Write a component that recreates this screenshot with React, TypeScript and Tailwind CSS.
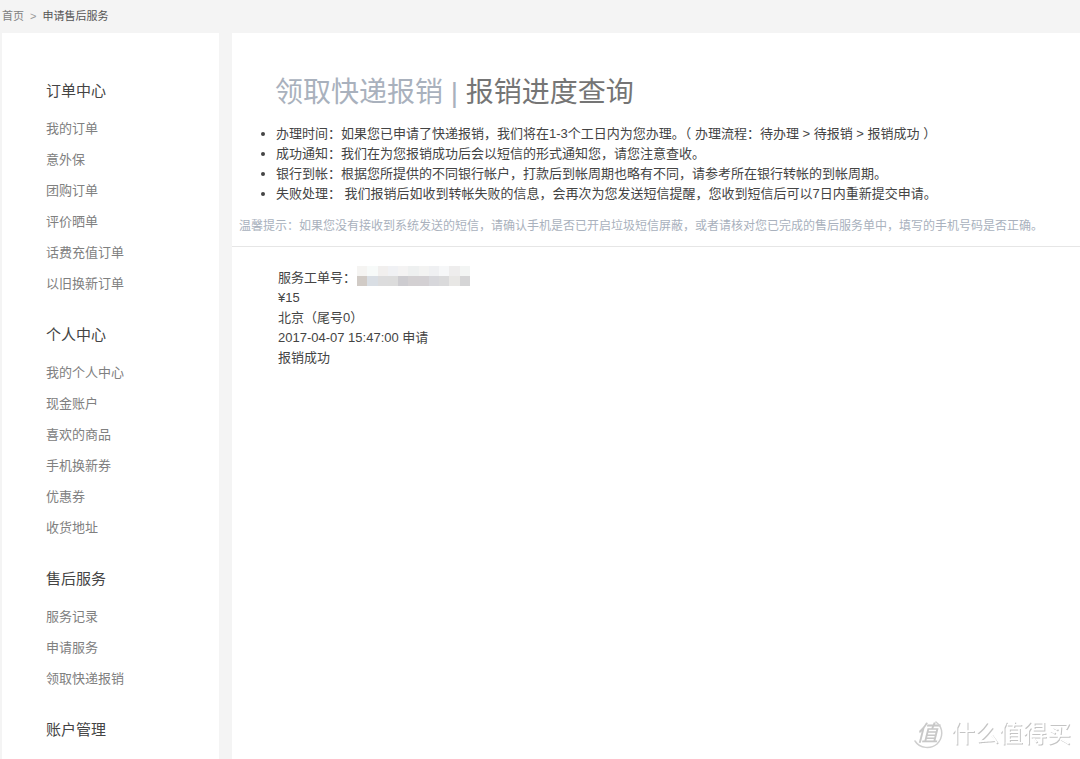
type NavGroup = { title: string; items: string[] };

const NAV_GROUPS: NavGroup[] = [
  { title: "订单中心", items: ["我的订单", "意外保", "团购订单", "评价晒单", "话费充值订单", "以旧换新订单"] },
  { title: "个人中心", items: ["我的个人中心", "现金账户", "喜欢的商品", "手机换新券", "优惠券", "收货地址"] },
  { title: "售后服务", items: ["服务记录", "申请服务", "领取快递报销"] },
  { title: "账户管理", items: [] },
];

const NOTICES = [
  "办理时间：如果您已申请了快递报销，我们将在1-3个工日内为您办理。（ 办理流程：待办理 > 待报销 > 报销成功 ）",
  "成功通知：我们在为您报销成功后会以短信的形式通知您，请您注意查收。",
  "银行到帐：根据您所提供的不同银行帐户，打款后到帐周期也略有不同，请参考所在银行转帐的到帐周期。",
  "失败处理： 我们报销后如收到转帐失败的信息，会再次为您发送短信提醒，您收到短信后可以7日内重新提交申请。",
];

// Two rows of blocks hiding the order number
const MASK_CELLS = [
  "bg-[#f5f4f2]", "bg-[#f7faf9]", "bg-[#f1efee]", "bg-[#f0f1f4]", "bg-[#f4f3f3]", "bg-[#eef0f0]",
  "bg-[#f3f3f2]", "bg-[#eff0f2]", "bg-[#f6f7f8]", "bg-[#eeeded]", "bg-[#f3f5f4]",
  "bg-[#d1cbc6]", "bg-[#d9dee4]", "bg-[#dcdcdd]", "bg-[#dcdcdc]", "bg-[#cdccd0]", "bg-[#d3d0d2]",
  "bg-[#d3d0d3]", "bg-[#d7d7db]", "bg-[#dadadb]", "bg-[#e8e7e5]", "bg-[#d5d5d6]",
];

function Breadcrumb() {
  return (
    <nav aria-label="breadcrumb" className="flex h-[33px] items-start gap-[6px] pt-2 pl-[2px] text-[11px] leading-4">
      <a href="#" className="text-[#808080]">首页</a>
      <span className="text-[#999]">&gt;</span>
      <a href="#" className="text-[#555]">申请售后服务</a>
    </nav>
  );
}

function Sidebar() {
  return (
    <aside className="w-[217px] shrink-0 bg-white pt-[46px] pl-11">
      {NAV_GROUPS.map((group) => (
        <section key={group.title} className="mb-6 last:mb-0">
          <h2 className="mb-[10px] text-[15px] leading-6 text-[#444]">{group.title}</h2>
          <ul>
            {group.items.map((item) => (
              <li key={item} className="text-[13px] leading-[31px]">
                <a href="#" className="text-[#808080] hover:text-[#333]">{item}</a>
              </li>
            ))}
          </ul>
        </section>
      ))}
    </aside>
  );
}

function ServiceOrder() {
  return (
    <div className="pt-[19px] pl-[46px] text-[13px] leading-5 text-[#444]">
      <div className="flex items-start">
        <span className="pt-[2px]">服务工单号：</span>
        <div className="ml-[1px] grid w-[113px] grid-cols-11">
          {MASK_CELLS.map((cell, i) => (
            <span key={i} className={`h-[10px] ${cell}`} />
          ))}
        </div>
      </div>
      <p>¥15</p>
      <p>北京（尾号0）</p>
      <p>2017-04-07 15:47:00 申请</p>
      <p>报销成功</p>
    </div>
  );
}

function Watermark() {
  return (
    <div className="pointer-events-none fixed right-[9px] bottom-[9px] flex items-center gap-2">
      <span className="relative flex size-8 items-center justify-center text-[22px] leading-none font-medium text-[#c8c8c8] italic">
        <svg viewBox="0 0 32 32" className="absolute inset-0" fill="none" aria-hidden="true">
          <path d="M25 4 C33 10 32 20 26 26 C20 31 9 31 4 23" stroke="#cfcfcf" strokeWidth="1.5" strokeLinecap="round" />
        </svg>
        值
      </span>
      <span className="text-[24px] leading-8 text-white [text-shadow:1px_1px_0_#c4c4c4]">什么值得买</span>
    </div>
  );
}

export default function App() {
  return (
    <div className="flex min-h-screen flex-col bg-[#f4f4f4] font-['Liberation_Sans','Noto_Sans_CJK_SC',sans-serif]">
      <Breadcrumb />
      <div className="flex flex-1 gap-[13px] pl-[2px]">
        <Sidebar />
        <main className="min-w-0 flex-1 bg-white pt-10">
          <h1 className="pl-[43px] text-[28px] leading-10 text-[#a9b1bd]">
            <a href="#">领取快递报销</a> | <span className="text-[#757575]">报销进度查询</span>
          </h1>
          <ul className="mt-[11px] list-disc pl-11 text-[13px] leading-5 text-[#444]">
            {NOTICES.map((notice) => (
              <li key={notice}>{notice}</li>
            ))}
          </ul>
          <p className="mt-3 border-b border-[#e6e6e6] pb-[10px] pl-[7px] text-[12px] leading-5 text-[#a9b1bd]">
            温馨提示：如果您没有接收到系统发送的短信，请确认手机是否已开启垃圾短信屏蔽，或者请核对您已完成的售后服务单中，填写的手机号码是否正确。
          </p>
          <ServiceOrder />
        </main>
      </div>
      <Watermark />
    </div>
  );
}
